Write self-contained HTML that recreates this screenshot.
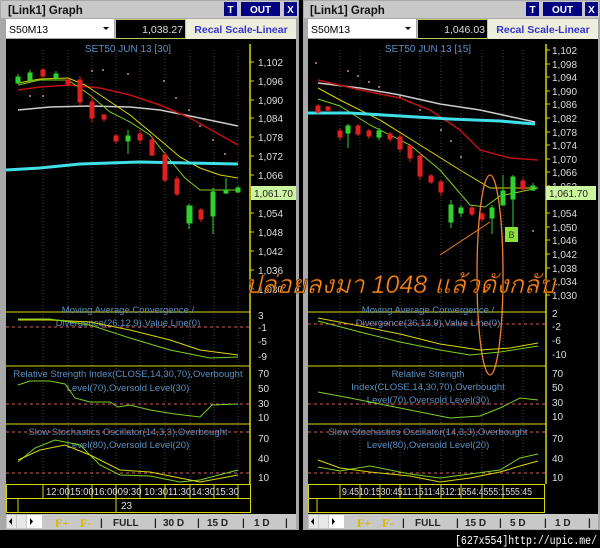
<!DOCTYPE html>
<html><head><meta charset="utf-8"><style>
html,body{margin:0;padding:0;background:#000;width:600px;height:548px;overflow:hidden}
svg{display:block}
</style></head><body>
<svg width="600" height="548" viewBox="0 0 600 548" xmlns="http://www.w3.org/2000/svg" font-family="Liberation Sans, sans-serif">
<rect width="600" height="548" fill="#000"/>

<!-- LEFT PANEL -->
<g>
<rect x="0" y="0" width="299" height="530" fill="#a8a8a8"/>
<rect x="1" y="1" width="297" height="17" fill="#c8c8c8"/>
<text x="8" y="14" font-size="11.5" font-weight="bold" fill="#111">[Link1] Graph</text>
<rect x="224" y="2" width="13" height="14" fill="#000080"/><text x="230.5" y="13" font-size="10" font-weight="bold" fill="#fff" text-anchor="middle">T</text>
<rect x="241" y="2" width="39" height="14" fill="#000080"/><text x="260.5" y="13" font-size="10" font-weight="bold" fill="#fff" text-anchor="middle">OUT</text>
<rect x="284" y="2" width="13" height="14" fill="#000080"/><text x="290.5" y="13" font-size="10" font-weight="bold" fill="#fff" text-anchor="middle">X</text>
<rect x="6" y="19" width="108" height="19" fill="#fff"/>
<text x="9" y="33" font-size="10.5" fill="#000">S50M13</text>
<path d="M103 27l3 3 3-3z" fill="#000"/>
<rect x="115.5" y="19.5" width="70" height="19" fill="#000" stroke="#c8c860"/>
<text x="183" y="33" font-size="10.5" fill="#ddd" text-anchor="end">1,038.27</text>
<rect x="186" y="19" width="110" height="20" fill="#eeeedd"/>
<text x="241" y="33" font-size="10.5" font-weight="bold" fill="#3333cc" text-anchor="middle">Recal Scale-Linear</text>
<rect x="6" y="39" width="290" height="475" fill="#000"/>
<g stroke="#444" stroke-dasharray="1,2">
<path d="M43 50V480M68 50V480M92 50V480M116 50V480M140 50V480M165 50V480M190 50V480M214 50V480M238 50V480"/>
</g>
<text x="128" y="52" font-size="10" fill="#5a8fc0" text-anchor="middle">SET50 JUN 13   [30]</text>
<line x1="250" y1="44" x2="250" y2="484" stroke="#d8d800" stroke-width="1.5"/>
<g fill="#ddd" font-size="10">
<text x="258" y="66">1,102</text><text x="258" y="85">1,096</text><text x="258" y="104">1,090</text><text x="258" y="122">1,084</text><text x="258" y="141">1,078</text><text x="258" y="160">1,072</text><text x="258" y="179">1,066</text><text x="258" y="217">1,054</text><text x="258" y="236">1,048</text><text x="258" y="255">1,042</text><text x="258" y="274">1,036</text><text x="258" y="293">1,030</text>
</g>
<g stroke="#d8d800"><path d="M250 62h4M250 81h4M250 100h4M250 118h4M250 137h4M250 156h4M250 175h4M250 194h4M250 213h4M250 232h4M250 251h4M250 270h4M250 289h4"/></g>
<g fill="#c09090"><circle cx="92" cy="71" r="1"/><circle cx="103" cy="70" r="1"/><circle cx="128" cy="74" r="1"/><circle cx="164" cy="81" r="1"/><circle cx="176" cy="98" r="1"/><circle cx="189" cy="110" r="1"/><circle cx="200" cy="126" r="1"/><circle cx="213" cy="140" r="1"/><circle cx="225" cy="154" r="1"/><circle cx="30" cy="96" r="1"/><circle cx="43" cy="96" r="1"/></g>
<polyline points="18,110 50,107 90,106 130,107 160,110 190,116 238,126" fill="none" stroke="#ccc" stroke-width="1.5"/>
<polyline points="18,90 40,87 70,85 100,88 130,95 160,105 190,118 215,132 238,145" fill="none" stroke="#c01010" stroke-width="1.5"/>
<polyline points="18,83 40,79 68,78 85,85 100,95 130,115 160,140 180,157 200,168 220,175 238,178" fill="none" stroke="#d8d800" stroke-width="1"/>
<polyline points="18,85 40,80 68,80 90,95 110,112 130,122 150,135 170,160 185,178 200,190 238,190" fill="none" stroke="#7cd020" stroke-width="1"/>
<polyline points="6,170 40,168 80,164 140,162 238,164" fill="none" stroke="#40e0e8" stroke-width="3"/>
<g stroke-width="1">
<g stroke="#30d030" fill="#30d030"><path d="M18 74v10M30 70v12M56 71v9M128 130v24M189 204v25M213 188v46M226 178v16M238 186v7"/><rect x="16" y="77" width="4" height="6"/><rect x="28" y="73" width="4" height="7"/><rect x="54" y="74" width="4" height="4"/><rect x="126" y="136" width="4" height="5"/><rect x="187" y="206" width="5" height="17"/><rect x="211" y="192" width="4" height="24"/><rect x="224" y="190" width="4" height="3"/><rect x="236" y="188" width="4" height="4"/></g>
<g stroke="#e02020" fill="#e02020"><path d="M43 68v10M80 76v30M92 96v26M104 114v8M116 134v10M140 130v14M152 136v20M165 152v30M177 176v20M201 208v14M68 78v8"/><rect x="41" y="70" width="4" height="6"/><rect x="78" y="80" width="4" height="22"/><rect x="90" y="102" width="4" height="16"/><rect x="102" y="115" width="4" height="4"/><rect x="114" y="136" width="4" height="5"/><rect x="138" y="134" width="4" height="6"/><rect x="150" y="140" width="4" height="15"/><rect x="163" y="155" width="4" height="25"/><rect x="175" y="179" width="4" height="15"/><rect x="199" y="210" width="4" height="9"/><rect x="66" y="80" width="4" height="4"/></g>
</g>
<rect x="251" y="186" width="45" height="14" fill="#ccf5a0"/>
<text x="254" y="197" font-size="10" fill="#222">1,061.70</text>
<line x1="6" y1="312" x2="250" y2="312" stroke="#d8d800"/>
<text x="128" y="313" font-size="9.5" fill="#5a8fc0" text-anchor="middle">Moving Average Convergence /</text>
<text x="128" y="326" font-size="9.5" fill="#5a8fc0" text-anchor="middle">Divergence(26,12,9),Value Line(0)</text>
<line x1="6" y1="327" x2="250" y2="327" stroke="#d06060" stroke-dasharray="3,3"/>
<polyline points="18,320 50,320 90,322 130,330 170,340 200,350 238,355" fill="none" stroke="#d8d800"/>
<polyline points="18,319 50,319 90,325 130,338 170,350 210,358 238,357" fill="none" stroke="#7cd020"/>
<g fill="#ddd" font-size="10"><text x="258" y="319">3</text><text x="258" y="331">-1</text><text x="258" y="345">-5</text><text x="258" y="360">-9</text></g>
<line x1="6" y1="366" x2="250" y2="366" stroke="#d8d800"/>
<text x="128" y="377" font-size="9.5" fill="#5a8fc0" text-anchor="middle">Relative Strength Index(CLOSE,14,30,70),Overbought</text>
<text x="128" y="391" font-size="9.5" fill="#5a8fc0" text-anchor="middle">Level(70),Oversold Level(30)</text>
<line x1="6" y1="404" x2="250" y2="404" stroke="#d06060" stroke-dasharray="3,3"/>
<polyline points="18,385 30,381 50,381 65,384 75,398 90,402 110,402 118,407 130,405 150,410 175,414 200,417 212,405 238,404" fill="none" stroke="#7cd020"/>
<g fill="#ddd" font-size="10"><text x="258" y="377">70</text><text x="258" y="392">50</text><text x="258" y="407">30</text><text x="258" y="421">10</text></g>
<line x1="6" y1="424" x2="250" y2="424" stroke="#d8d800"/>
<text x="128" y="435" font-size="9.5" fill="#5a8fc0" text-anchor="middle">Slow Stochastics Oscillator(14,3,3),Overbought</text>
<text x="128" y="448" font-size="9.5" fill="#5a8fc0" text-anchor="middle">Level(80),Oversold Level(20)</text>
<line x1="6" y1="432" x2="250" y2="432" stroke="#d06060" stroke-dasharray="3,3"/>
<line x1="6" y1="473" x2="250" y2="473" stroke="#d06060" stroke-dasharray="3,3"/>
<polyline points="18,462 35,448 55,440 80,445 100,465 120,475 150,476 180,482 200,480 238,470" fill="none" stroke="#7cd020"/>
<polyline points="18,460 40,450 65,445 90,455 120,470 150,472 180,478 200,482 238,475" fill="none" stroke="#d8d800"/>
<g fill="#ddd" font-size="10"><text x="258" y="442">70</text><text x="258" y="462">40</text><text x="258" y="481">10</text></g>
<g fill="none" stroke="#d8d800"><rect x="6.5" y="484.5" width="244" height="14"/><rect x="6.5" y="498.5" width="244" height="14"/><path d="M43 484v14M68 484v14M92 484v14M116 484v14M140 484v14M165 484v14M190 484v14M214 484v14M238 484v14M18 498v14M116 498v14"/></g>
<text x="46" y="495" font-size="10" fill="#ddd" textLength="193" lengthAdjust="spacingAndGlyphs">12:0015:0016:0009:30 10:3011:3014:3015:30</text>
<text x="121" y="509" font-size="10" fill="#ddd">23</text>
<rect x="6" y="514" width="290" height="15" fill="#c8c8c8"/>
<rect x="7" y="515" width="9" height="13" fill="#e8e8e8"/><rect x="17" y="515" width="9" height="13" fill="#e8e8e8"/><rect x="27" y="515" width="15" height="13" fill="#fff"/>
<path d="M12 518l-3 3.5 3 3.5zM30 518l3 3.5-3 3.5z" fill="#000"/>
<g font-size="12" font-weight="bold" fill="#d8b800" font-family="Liberation Serif, serif"><text x="55" y="527">F+</text><text x="80" y="527">F-</text></g>
<g font-size="10" font-weight="bold" fill="#222"><text x="100" y="526">|</text><text x="113" y="526">FULL</text><text x="154" y="526">|</text><text x="163" y="526">30 D</text><text x="197" y="526">|</text><text x="207" y="526">15 D</text><text x="242" y="526">|</text><text x="254" y="526">1 D</text><text x="285" y="526">|</text></g>
</g>

<!-- RIGHT PANEL -->
<g>
<rect x="303" y="0" width="297" height="530" fill="#a8a8a8"/>
<rect x="304" y="1" width="295" height="17" fill="#c8c8c8"/>
<text x="310" y="14" font-size="11.5" font-weight="bold" fill="#111">[Link1] Graph</text>
<rect x="526" y="2" width="13" height="14" fill="#000080"/><text x="532.5" y="13" font-size="10" font-weight="bold" fill="#fff" text-anchor="middle">T</text>
<rect x="543" y="2" width="39" height="14" fill="#000080"/><text x="562.5" y="13" font-size="10" font-weight="bold" fill="#fff" text-anchor="middle">OUT</text>
<rect x="585" y="2" width="13" height="14" fill="#000080"/><text x="591.5" y="13" font-size="10" font-weight="bold" fill="#fff" text-anchor="middle">X</text>
<rect x="308" y="19" width="108" height="19" fill="#fff"/>
<text x="311" y="33" font-size="10.5" fill="#000">S50M13</text>
<path d="M405 27l3 3 3-3z" fill="#000"/>
<rect x="417.5" y="19.5" width="70" height="19" fill="#000" stroke="#c8c860"/>
<text x="485" y="33" font-size="10.5" fill="#ddd" text-anchor="end">1,046.03</text>
<rect x="488" y="19" width="110" height="20" fill="#eeeedd"/>
<text x="543" y="33" font-size="10.5" font-weight="bold" fill="#3333cc" text-anchor="middle">Recal Scale-Linear</text>
<rect x="308" y="39" width="290" height="475" fill="#000"/>
<g stroke="#444" stroke-dasharray="1,2">
<path d="M340 50V480M360 50V480M380 50V480M400 50V480M420 50V480M441 50V480M461 50V480M482 50V480M503 50V480M523 50V480"/>
</g>
<text x="428" y="52" font-size="10" fill="#5a8fc0" text-anchor="middle">SET50 JUN 13   [15]</text>
<line x1="546" y1="44" x2="546" y2="484" stroke="#d8d800" stroke-width="1.5"/>
<g fill="#ddd" font-size="10">
<text x="552" y="54">1,102</text><text x="552" y="68">1,098</text><text x="552" y="81">1,094</text><text x="552" y="95">1,090</text><text x="552" y="108">1,086</text><text x="552" y="122">1,082</text><text x="552" y="136">1,078</text><text x="552" y="149">1,074</text><text x="552" y="163">1,070</text><text x="552" y="176">1,066</text><text x="552" y="190">1,062</text><text x="552" y="217">1,054</text><text x="552" y="231">1,050</text><text x="552" y="244">1,046</text><text x="552" y="258">1,042</text><text x="552" y="272">1,038</text><text x="552" y="285">1,034</text><text x="552" y="299">1,030</text>
</g>
<g stroke="#d8d800"><path d="M546 50h4M546 64h4M546 77h4M546 91h4M546 104h4M546 118h4M546 132h4M546 145h4M546 159h4M546 172h4M546 186h4M546 213h4M546 227h4M546 240h4M546 254h4M546 268h4M546 281h4M546 295h4"/></g>
<g fill="#c09090"><circle cx="316" cy="63" r="1"/><circle cx="348" cy="71" r="1"/><circle cx="358" cy="76" r="1"/><circle cx="369" cy="82" r="1"/><circle cx="379" cy="87" r="1"/><circle cx="400" cy="97" r="1"/><circle cx="410" cy="102" r="1"/><circle cx="420" cy="110" r="1"/><circle cx="441" cy="130" r="1"/><circle cx="451" cy="141" r="1"/><circle cx="461" cy="157" r="1"/><circle cx="533" cy="231" r="1"/></g>
<polyline points="318,83 360,88 400,95 440,104 480,110 535,122" fill="none" stroke="#ccc" stroke-width="1.5"/>
<polyline points="318,80 360,90 400,98 430,110 460,130 480,150 510,158 538,160" fill="none" stroke="#c01010" stroke-width="1.5"/>
<polyline points="318,88 340,100 380,120 420,145 460,170 490,188 538,188" fill="none" stroke="#d8d800"/>
<polyline points="318,99 340,106 370,125 410,145 440,170 470,205 485,207 500,196 538,188" fill="none" stroke="#7cd020"/>
<polyline points="308,113 350,113 400,116 450,119 500,121 535,124" fill="none" stroke="#40e0e8" stroke-width="3"/>
<g stroke="#30d030" fill="#30d030"><path d="M348 124v24M379 128v12M451 200v28M461 205v12M492 205v29M503 175v30M513 175v56M533 183v8"/><rect x="346" y="126" width="4" height="7"/><rect x="377" y="131" width="4" height="6"/><rect x="449" y="205" width="4" height="17"/><rect x="459" y="208" width="4" height="5"/><rect x="490" y="208" width="4" height="10"/><rect x="501" y="191" width="4" height="14"/><rect x="511" y="177" width="4" height="22"/><rect x="531" y="186" width="4" height="4"/></g>
<g stroke="#e02020" fill="#e02020"><path d="M318 104v10M328 106v6M340 128v12M358 124v12M369 129v10M390 132v10M400 134v18M410 144v18M420 152v28M431 174v10M441 180v16M472 206v10M482 212v10M523 178v14"/><rect x="316" y="106" width="4" height="6"/><rect x="326" y="107" width="4" height="3"/><rect x="338" y="131" width="4" height="6"/><rect x="356" y="126" width="4" height="8"/><rect x="367" y="131" width="4" height="5"/><rect x="388" y="134" width="4" height="5"/><rect x="398" y="137" width="4" height="12"/><rect x="408" y="146" width="4" height="12"/><rect x="418" y="156" width="4" height="20"/><rect x="429" y="176" width="4" height="6"/><rect x="439" y="182" width="4" height="10"/><rect x="470" y="208" width="4" height="6"/><rect x="480" y="214" width="4" height="5"/><rect x="521" y="181" width="4" height="8"/></g>
<rect x="505" y="227" width="13" height="15" fill="#8ce03c"/><text x="511.5" y="238" font-size="9" fill="#333" text-anchor="middle">B</text>
<rect x="546" y="186" width="50" height="14" fill="#ccf5a0"/>
<text x="549" y="197" font-size="10" fill="#222">1,061.70</text>
<line x1="440" y1="255" x2="490" y2="222" stroke="#f08030" stroke-width="1"/>
<ellipse cx="490" cy="275" rx="13" ry="100" fill="none" stroke="#f08030" stroke-width="1.3"/>
<line x1="308" y1="312" x2="546" y2="312" stroke="#d8d800"/>
<text x="428" y="313" font-size="9.5" fill="#5a8fc0" text-anchor="middle">Moving Average Convergence /</text>
<text x="428" y="326" font-size="9.5" fill="#5a8fc0" text-anchor="middle">Divergence(26,12,9),Value Line(0)</text>
<line x1="308" y1="324" x2="546" y2="324" stroke="#d06060" stroke-dasharray="3,3"/>
<polyline points="318,318 360,326 400,334 440,344 480,350 510,348 538,343" fill="none" stroke="#d8d800"/>
<polyline points="318,321 360,332 400,342 440,350 470,355 500,352 538,346" fill="none" stroke="#7cd020"/>
<g fill="#ddd" font-size="10"><text x="552" y="317">2</text><text x="552" y="330">-2</text><text x="552" y="344">-6</text><text x="552" y="358">-10</text></g>
<line x1="308" y1="366" x2="546" y2="366" stroke="#d8d800"/>
<text x="428" y="377" font-size="9.5" fill="#5a8fc0" text-anchor="middle">Relative Strength</text>
<text x="428" y="390" font-size="9.5" fill="#5a8fc0" text-anchor="middle">Index(CLOSE,14,30,70),Overbought</text>
<text x="428" y="403" font-size="9.5" fill="#5a8fc0" text-anchor="middle">Level(70),Oversold Level(30)</text>
<line x1="308" y1="404" x2="546" y2="404" stroke="#d06060" stroke-dasharray="3,3"/>
<polyline points="318,392 350,398 380,404 420,412 450,418 480,416 500,408 520,398 538,400" fill="none" stroke="#7cd020"/>
<g fill="#ddd" font-size="10"><text x="552" y="377">70</text><text x="552" y="391">50</text><text x="552" y="406">30</text><text x="552" y="420">10</text></g>
<line x1="308" y1="424" x2="546" y2="424" stroke="#d8d800"/>
<text x="428" y="435" font-size="9.5" fill="#5a8fc0" text-anchor="middle">Slow Stochastics Oscillator(14,3,3),Overbought</text>
<text x="428" y="448" font-size="9.5" fill="#5a8fc0" text-anchor="middle">Level(80),Oversold Level(20)</text>
<line x1="308" y1="432" x2="546" y2="432" stroke="#d06060" stroke-dasharray="3,3"/>
<line x1="308" y1="473" x2="546" y2="473" stroke="#d06060" stroke-dasharray="3,3"/>
<polyline points="318,467 340,471 370,466 410,474 440,478 470,474 500,470 520,458 538,454" fill="none" stroke="#7cd020"/>
<polyline points="318,460 340,468 370,472 410,476 440,482 470,478 500,472 520,466 538,461" fill="none" stroke="#d8d800"/>
<g fill="#ddd" font-size="10"><text x="552" y="442">70</text><text x="552" y="462">40</text><text x="552" y="481">10</text></g>
<g fill="none" stroke="#d8d800"><rect x="308.5" y="484.5" width="236" height="14"/><rect x="308.5" y="498.5" width="236" height="14"/><path d="M340 484v14M360 484v14M380 484v14M400 484v14M420 484v14M441 484v14M461 484v14M482 484v14M503 484v14M317 498v14"/></g>
<text x="342" y="495" font-size="10" fill="#ddd" textLength="190" lengthAdjust="spacingAndGlyphs">9:4510:1530:4511:1511:4512:1554:4555:1555:45</text>
<rect x="308" y="514" width="290" height="15" fill="#c8c8c8"/>
<rect x="309" y="515" width="9" height="13" fill="#e8e8e8"/><rect x="319" y="515" width="9" height="13" fill="#e8e8e8"/><rect x="329" y="515" width="15" height="13" fill="#fff"/>
<path d="M314 518l-3 3.5 3 3.5zM332 518l3 3.5-3 3.5z" fill="#000"/>
<g font-size="12" font-weight="bold" fill="#d8b800" font-family="Liberation Serif, serif"><text x="357" y="527">F+</text><text x="382" y="527">F-</text></g>
<g font-size="10" font-weight="bold" fill="#222"><text x="402" y="526">|</text><text x="415" y="526">FULL</text><text x="456" y="526">|</text><text x="465" y="526">15 D</text><text x="499" y="526">|</text><text x="510" y="526">5 D</text><text x="544" y="526">|</text><text x="555" y="526">1 D</text><text x="588" y="526">|</text></g>
</g>

<text x="245" y="293" font-size="25" font-style="italic" fill="#ff8a1a" stroke="#3a1a00" stroke-width="0.6" textLength="310" lengthAdjust="spacingAndGlyphs" font-family="Liberation Sans, 'Noto Sans CJK SC', 'DejaVu Sans', sans-serif">ปล่อยลงมา 1048 แล้วดังกลับ</text>

<text x="597" y="544" font-size="11.5" fill="#fff" text-anchor="end" textLength="142" lengthAdjust="spacingAndGlyphs" font-family="Liberation Mono, monospace">[627x554]http://upic.me/</text>
</svg>
</body></html>
